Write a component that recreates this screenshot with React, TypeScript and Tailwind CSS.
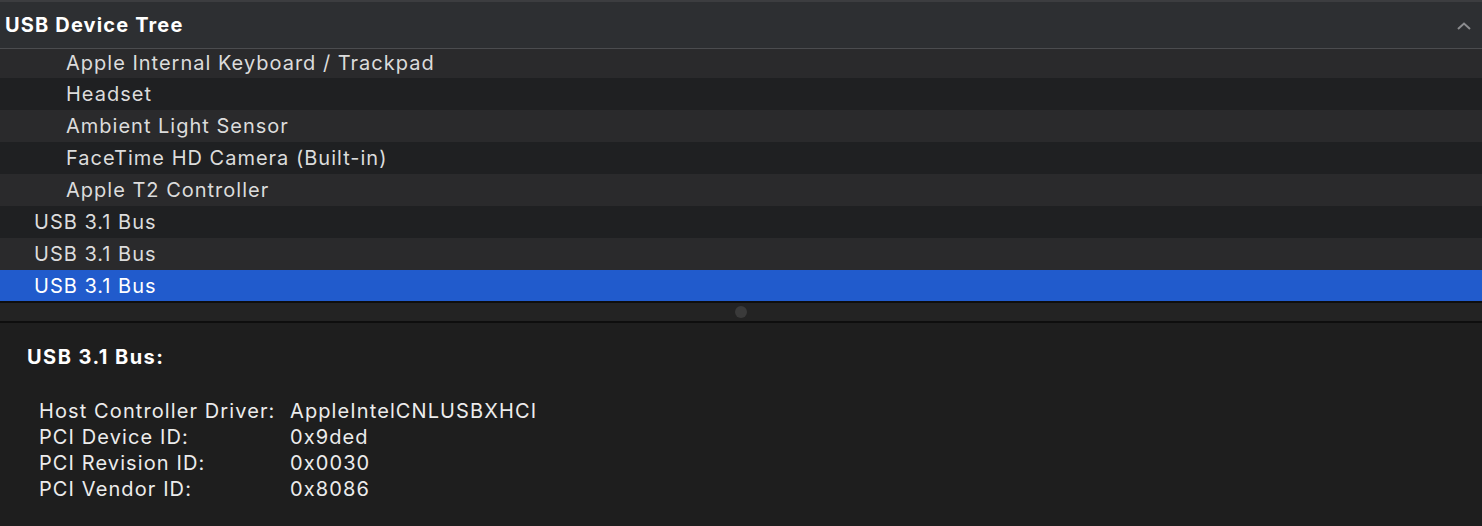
import React from "react";

const rows: { label: string; indent: boolean }[] = [
  { label: "Apple Internal Keyboard / Trackpad", indent: true },
  { label: "Headset", indent: true },
  { label: "Ambient Light Sensor", indent: true },
  { label: "FaceTime HD Camera (Built-in)", indent: true },
  { label: "Apple T2 Controller", indent: true },
  { label: "USB 3.1 Bus", indent: false },
  { label: "USB 3.1 Bus", indent: false },
];

const details: [string, string][] = [
  ["Host Controller Driver:", "AppleIntelCNLUSBXHCI"],
  ["PCI Device ID:", "0x9ded"],
  ["PCI Revision ID:", "0x0030"],
  ["PCI Vendor ID:", "0x8086"],
];

export default function App() {
  return (
    <div
      className="w-[1482px] h-[526px] overflow-hidden bg-[#1e1e1e] flex flex-col"
      style={{ fontFamily: "Inter, 'Noto Sans', sans-serif" }}
    >
      <div className="h-[2px] bg-[#3c3d40]" />
      <div className="h-[46px] bg-[#2d2f32] flex items-center justify-between pl-[5px] pr-[10px]">
        <span className="text-[20px] font-bold text-white tracking-[1.15px]">USB Device Tree</span>
        <svg width="16" height="10" viewBox="0 0 16 10" className="mt-[1px]">
          <path d="M2 8 L8 2.5 L14 8" fill="none" stroke="#8b8c8f" strokeWidth="2" />
        </svg>
      </div>
      <div className="h-[1px] bg-[#4b4c4f]" />
      <div className="flex flex-col">
        {rows.map((r, i) => (
          <div
            key={i}
            className={`${i === 0 ? "h-[29px]" : "h-[32px]"} flex items-center ${
              i % 2 === 0 ? "bg-[#2a2a2c]" : "bg-[#1f2022]"
            } ${r.indent ? "pl-[66px]" : "pl-[34px]"}`}
          >
            <span className="text-[20px] text-[#dcdcdc] tracking-[1px] -mt-[1px]">{r.label}</span>
          </div>
        ))}
        <div className="h-[31px] flex items-center bg-[#215bcc] pl-[34px]">
          <span className="text-[20px] text-white tracking-[1px]">USB 3.1 Bus</span>
        </div>
      </div>
      <div className="h-[2px] bg-[#0e0e0e]" />
      <div className="h-[18px] bg-[#232323] flex items-center justify-center">
        <div className="w-[12px] h-[12px] rounded-full bg-[#3a3a3a]" />
      </div>
      <div className="h-[2px] bg-[#0e0e0e]" />
      <div className="flex-1 bg-[#1e1e1e] pl-[27px] pt-[19px]">
        <div className="text-[20px] font-bold text-white tracking-[1.45px]">USB 3.1 Bus:</div>
        <div className="mt-[26px] pl-[12px] flex flex-col">
          {details.map(([k, v]) => (
            <div key={k} className="flex h-[26px] items-center text-[20px] text-[#ececec] tracking-[1.1px]">
              <span className="w-[251px] shrink-0">{k}</span>
              <span>{v}</span>
            </div>
          ))}
        </div>
      </div>
    </div>
  );
}
